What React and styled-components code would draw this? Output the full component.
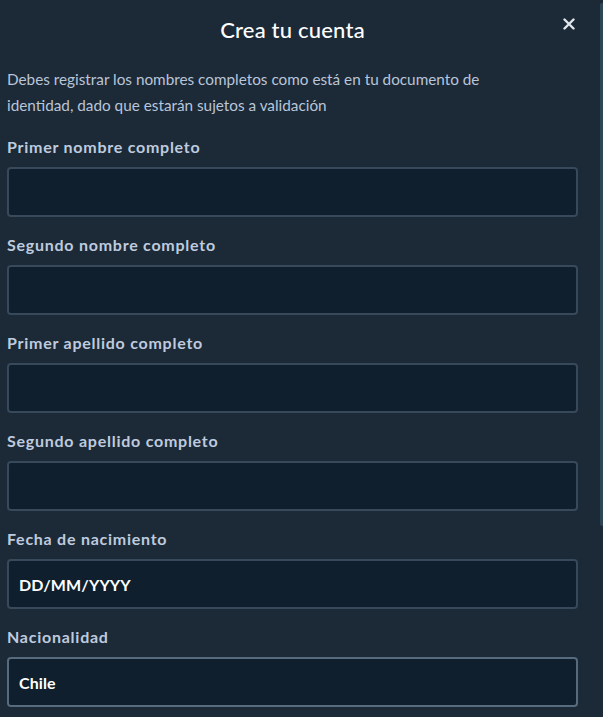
import React, { useState } from "react";
import styled, { createGlobalStyle } from "styled-components";

const GlobalStyle = createGlobalStyle`
  html, body {
    margin: 0;
    padding: 0;
    background: #1c2a37;
  }
  * {
    box-sizing: border-box;
  }
`;

const Frame = styled.div`
  position: relative;
  width: 603px;
  height: 717px;
`;

const Modal = styled.div`
  width: 100%;
  height: 100%;
  overflow-y: auto;
  scrollbar-width: none;
  background: #1c2a37;
  font-family: Lato, "Open Sans", sans-serif;
  color: #b9c5d9;

  &::-webkit-scrollbar {
    display: none;
  }
`;

// drawn thumb, the headless browser hides native scrollbars
const ScrollThumb = styled.div`
  position: absolute;
  top: 3px;
  right: 0;
  width: 3px;
  height: 523px;
  background: #2e4556;
  border-radius: 2px 0 0 2px;
`;

const Header = styled.header`
  display: flex;
  align-items: center;
  justify-content: center;
  position: relative;
  height: 58px;
  padding-right: 18px;
`;

const Title = styled.h1`
  margin: 0;
  font-size: 22px;
  font-weight: 500;
  letter-spacing: 0.2px;
  color: #ffffff;
`;

const CloseButton = styled.button`
  position: absolute;
  right: 26px;
  top: 16px;
  width: 16px;
  height: 16px;
  padding: 0;
  border: none;
  background: transparent;
  cursor: pointer;
  display: flex;
  align-items: center;
  justify-content: center;
`;

const Body = styled.div`
  padding: 8px 25px 260px 7px;
`;

const Intro = styled.p`
  margin: 0 0 19px;
  max-width: 540px;
  font-size: 15.3px;
  line-height: 26px;
  color: #b9c5d9;
`;

const Field = styled.div`
  display: flex;
  flex-direction: column;
  margin-bottom: 18px;
`;

const Label = styled.label`
  font-size: 16px;
  font-weight: 700;
  letter-spacing: 0.75px;
  color: #bfcadf;
  line-height: 20px;
  margin-bottom: 10px;
`;

const Input = styled.input`
  height: 50px;
  width: 100%;
  padding: 0 10px;
  background: #0f1f2d;
  border: 2px solid #37495b;
  border-radius: 4px;
  color: #ffffff;
  font-family: Lato, "Open Sans", sans-serif;
  font-size: 16px;
  font-weight: 700;
  letter-spacing: 0.1px;
  outline: none;
  caret-color: #ffffff;

  &:focus {
    border-color: #566b7d;
  }
`;

const fields = [
  { id: "first", label: "Primer nombre completo" },
  { id: "second", label: "Segundo nombre completo" },
  { id: "last", label: "Primer apellido completo" },
  { id: "last2", label: "Segundo apellido completo" },
  { id: "birth", label: "Fecha de nacimiento", value: "DD/MM/YYYY" },
  { id: "nation", label: "Nacionalidad", value: "Chile", focused: true },
];

export default function App() {
  const [values, setValues] = useState(
    Object.fromEntries(fields.map((f) => [f.id, f.value || ""]))
  );

  return (
    <>
      <GlobalStyle />
      <Frame>
        <Modal>
          <Header>
            <Title>Crea tu cuenta</Title>
            <CloseButton aria-label="Cerrar">
              <svg width="12" height="12" viewBox="0 0 12 12">
                <path
                  d="M1.5 1.5 L10.5 10.5 M10.5 1.5 L1.5 10.5"
                  stroke="#dfe6ee"
                  strokeWidth="2.4"
                  strokeLinecap="round"
                />
              </svg>
            </CloseButton>
          </Header>
          <Body>
            <Intro>
              Debes registrar los nombres completos como está en tu documento de
              identidad, dado que estarán sujetos a validación
            </Intro>
            {fields.map((f) => (
              <Field key={f.id}>
                <Label htmlFor={f.id}>{f.label}</Label>
                <Input
                  id={f.id}
                  autoFocus={f.focused}
                  value={values[f.id]}
                  onChange={(e) =>
                    setValues({ ...values, [f.id]: e.target.value })
                  }
                />
              </Field>
            ))}
          </Body>
        </Modal>
        <ScrollThumb />
      </Frame>
    </>
  );
}
